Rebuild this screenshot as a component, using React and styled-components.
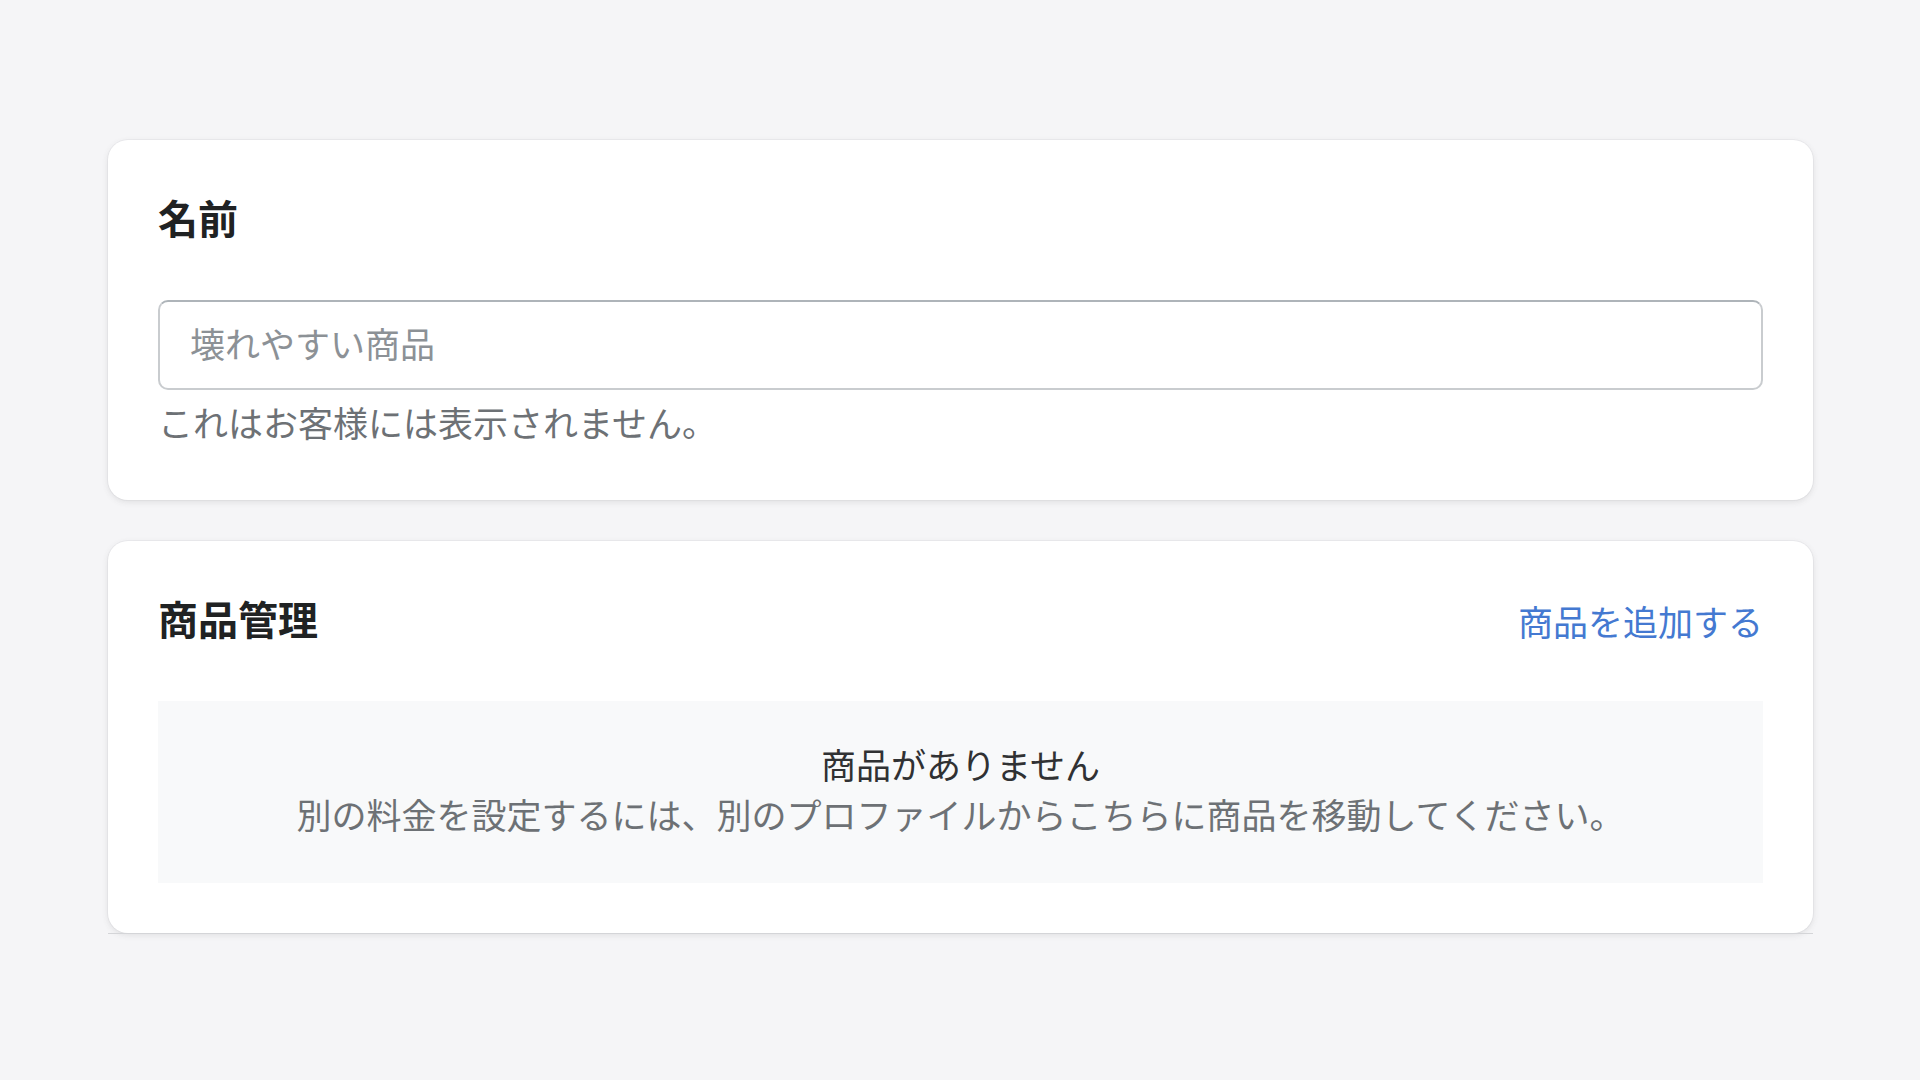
import React from 'react';
import styled, { createGlobalStyle } from 'styled-components';

const GlobalStyle = createGlobalStyle`
  html, body {
    margin: 0;
    padding: 0;
    background: #f5f5f7;
  }
  body {
    font-family: "Noto Sans CJK JP", "Noto Sans", sans-serif;
    color: #202223;
    -webkit-font-smoothing: antialiased;
  }
  * {
    box-sizing: border-box;
  }
`;

const Page = styled.div`
  min-height: 1080px;
  padding: 140px 107px 0 108px;
  display: flex;
  flex-direction: column;
  gap: 41px;
`;

const Card = styled.section`
  background: #ffffff;
  border-radius: 20px;
  padding: 50px;
  box-shadow: 0 0 0 1px rgba(63, 63, 68, 0.04), 0 2px 6px 0 rgba(63, 63, 68, 0.12);
`;

const CardGroup = styled.div`
  display: flex;
  flex-direction: column;
`;

const BottomRule = styled.div`
  height: 1px;
  background: #d4d5d8;
`;

const CardHeader = styled.div`
  display: flex;
  align-items: center;
  justify-content: space-between;
  margin-bottom: 50px;
`;

// line-height + padding-bottom keeps the 60px row but lifts the glyphs a touch
const Heading = styled.h2`
  margin: 0;
  font-size: 40px;
  line-height: 54px;
  padding-bottom: 6px;
  font-weight: 700;
  color: #202223;
`;

const BodyText = styled.p`
  margin: ${props => props.$gap || 0}px 0 0;
  font-size: 35px;
  line-height: 44px;
  padding-bottom: 6px;
  color: ${props => props.$color || '#6d7175'};
`;

const HeaderLink = styled.a`
  font-size: 35px;
  line-height: 50px;
  color: #4479d1;
  text-decoration: none;
  cursor: pointer;
`;

const TextInput = styled.input`
  display: block;
  width: 100%;
  height: 90px;
  padding: 0 30px 6px;
  font-family: inherit;
  font-size: 35px;
  color: #202223;
  background: #ffffff;
  border: 2px solid #c9cccf;
  border-top-color: #aeb4b9;
  border-radius: 10px;
  outline: none;

  &::placeholder {
    color: #8c9196;
  }
`;

const EmptyState = styled.div`
  height: 182px;
  background: #f8f9fa;
  display: flex;
  flex-direction: column;
  align-items: center;
  justify-content: center;
  text-align: center;
`;

export default function App() {
  return (
    <>
      <GlobalStyle />
      <Page>
        <Card>
          <CardHeader>
            <Heading>名前</Heading>
          </CardHeader>
          <TextInput placeholder="壊れやすい商品" />
          <BodyText $gap={10}>これはお客様には表示されません。</BodyText>
        </Card>
        <CardGroup>
          <Card>
            <CardHeader>
              <Heading>商品管理</Heading>
              <HeaderLink>商品を追加する</HeaderLink>
            </CardHeader>
            <EmptyState>
              <BodyText $color="#303133">商品がありません</BodyText>
              <BodyText>
                別の料金を設定するには、別のプロファイルからこちらに商品を移動してください。
              </BodyText>
            </EmptyState>
          </Card>
          <BottomRule />
        </CardGroup>
      </Page>
    </>
  );
}
